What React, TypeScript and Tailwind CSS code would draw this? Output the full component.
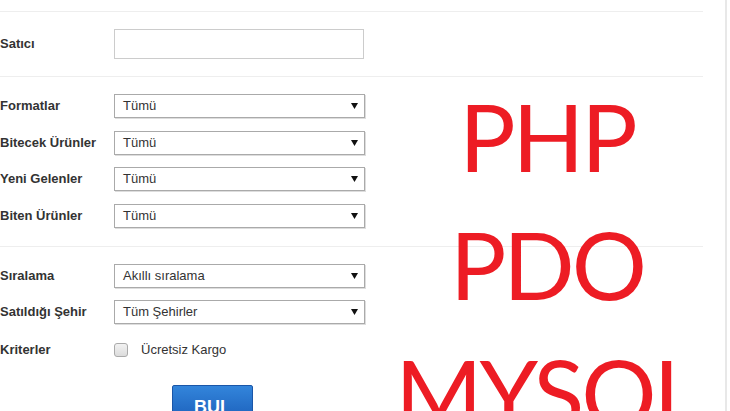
import React from 'react';

const label = 'w-[114px] shrink-0 text-[13px] font-bold text-[#333]';

function Caret() {
  return (
    <svg width="7" height="6" viewBox="0 0 7 6" className="shrink-0">
      <polygon points="0,0 7,0 3.5,6" fill="#111" />
    </svg>
  );
}

function FakeSelect({ value }: { value: string }) {
  return (
    <div className="flex h-6 w-[251px] items-center justify-between border border-[#aaa] bg-white pl-2 pr-[6px] text-[13px] text-[#333] shadow-[1px_1px_0_#ddd]">
      <span>{value}</span>
      <Caret />
    </div>
  );
}

function Row({ title, children }: { title: string; children: React.ReactNode }) {
  return (
    <div className="flex h-6 items-center">
      <div className={label}>{title}</div>
      {children}
    </div>
  );
}

export default function App() {
  return (
    <div
      className="relative h-[411px] w-[730px] overflow-hidden bg-white"
      style={{ fontFamily: '"Liberation Sans", Arial, sans-serif' }}
    >
      <div className="flex h-full">
        <div className="w-[703px] shrink-0 pt-[11px]">
          <div className="h-px bg-[#eee]" />

          {/* seller */}
          <div className="flex items-center py-[17px]">
            <div className={label}>Satıcı</div>
            <div className="h-[30px] w-[250px] border border-[#ccc] bg-white" />
          </div>

          <div className="h-px bg-[#eee]" />

          {/* filters */}
          <div className="flex flex-col gap-[12.5px] pt-[17px] pb-[18px]">
            <Row title="Formatlar"><FakeSelect value="Tümü" /></Row>
            <Row title="Bitecek Ürünler"><FakeSelect value="Tümü" /></Row>
            <Row title="Yeni Gelenler"><FakeSelect value="Tümü" /></Row>
            <Row title="Biten Ürünler"><FakeSelect value="Tümü" /></Row>
          </div>

          <div className="h-px bg-[#eee]" />

          {/* sorting */}
          <div className="flex flex-col gap-3 pt-[17px]">
            <Row title="Sıralama"><FakeSelect value="Akıllı sıralama" /></Row>
            <Row title="Satıldığı Şehir"><FakeSelect value="Tüm Şehirler" /></Row>
            <div className="flex h-6 items-center pt-[4px]">
              <div className={label}>Kriterler</div>
              <div className="flex items-center">
                <div className="h-[14px] w-[14px] rounded-[3px] border border-[#aaa] bg-gradient-to-b from-[#f2f2f2] to-[#dcdcdc]" />
                <span className="ml-[13px] text-[13px] text-[#333]">Ücretsiz Kargo</span>
              </div>
            </div>
          </div>

          <div className="pt-[25px] pl-[172px]">
            <button className="h-[36px] w-[81px] rounded-t-[2px] border border-[#1a56a8] bg-gradient-to-b from-[#3385db] to-[#1c60bb] pt-[8px] text-[18px] font-bold leading-none text-white">
              BUL
            </button>
          </div>
        </div>
        <div className="w-[22px]" />
        <div className="w-[2px] bg-[#e8e8e8]" />
      </div>

      {/* overlay title */}
      <div
        className="pointer-events-none absolute left-[347px] top-[72px] w-[400px] text-center text-[94px] leading-[128px] tracking-[-3px] text-[#ed1c24]"
        style={{ fontFamily: 'Lato, "Open Sans", sans-serif' }}
      >
        <div>PHP</div>
        <div>PDO</div>
        <div>MYSQL</div>
      </div>
    </div>
  );
}
